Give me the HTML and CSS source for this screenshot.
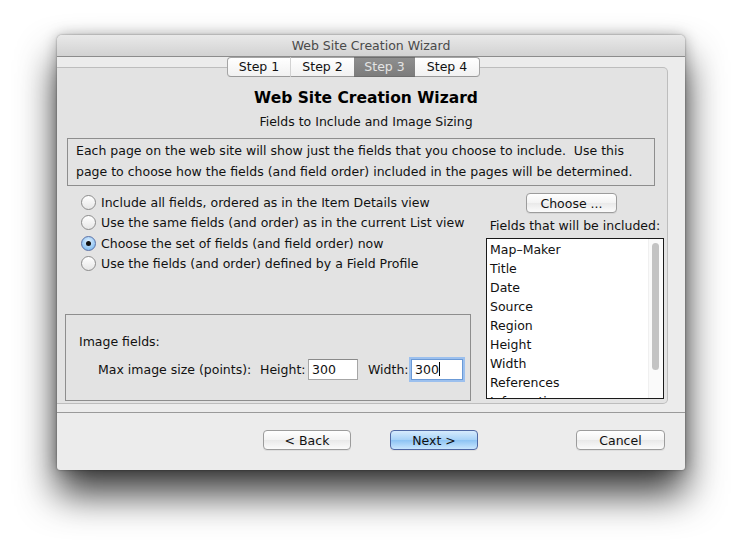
FILE: index.html
```html
<!DOCTYPE html>
<html lang="en">
<head>
  <meta charset="UTF-8" />
  <title>Web Site Creation Wizard</title>
  <link rel="stylesheet" href="styles.css">
</head>
<body>

<div class="window">
  <div class="titlebar">Web Site Creation Wizard</div>

  <div class="tabs">
    <span class="tab t1">Step 1</span>
    <span class="tab t2">Step 2</span>
    <span class="tab t3 active">Step 3</span>
    <span class="tab t4">Step 4</span>
  </div>

  <div class="panel">
    <h1>Web Site Creation Wizard</h1>
    <p class="subtitle">Fields to Include and Image Sizing</p>
    <div class="intro">
      Each page on the web site will show just the fields that you choose to include.&nbsp; Use this<br>
      page to choose how the fields (and field order) included in the pages will be determined.
    </div>

    <div class="columns">
      <div class="left">
        <div class="radios">
          <label class="radio"><span class="circle"></span>Include all fields, ordered as in the Item Details view</label>
          <label class="radio"><span class="circle"></span>Use the same fields (and order) as in the current List view</label>
          <label class="radio"><span class="circle checked"></span>Choose the set of fields (and field order) now</label>
          <label class="radio"><span class="circle"></span>Use the fields (and order) defined by a Field Profile</label>
        </div>

        <div class="image-box">
          <div class="image-title">Image fields:</div>
          <div class="size-row">
            <span class="lbl-max">Max image size (points):</span>
            <span class="lbl-h">Height:</span>
            <span class="field f-h">300</span>
            <span class="lbl-w">Width:</span>
            <span class="field f-w focus">300<span class="caret"></span></span>
          </div>
        </div>
      </div>

      <div class="right">
        <button class="btn choose">Choose ...</button>
        <div class="list-label">Fields that will be included:</div>
        <div class="list">
          <ul>
            <li>Map–Maker</li>
            <li>Title</li>
            <li>Date</li>
            <li>Source</li>
            <li>Region</li>
            <li>Height</li>
            <li>Width</li>
            <li>References</li>
            <li>Information</li>
          </ul>
          <div class="track"><div class="thumb"></div></div>
        </div>
      </div>
    </div>
  </div>

  <div class="footer">
    <button class="btn back">&lt; Back</button>
    <button class="btn next">Next &gt;</button>
    <button class="btn cancel">Cancel</button>
  </div>
</div>

</body>
</html>
```

FILE: styles.css
```css
html { background: #fff; }
body { margin: 0; min-height: 549px; background: #fff; font-family: "DejaVu Sans", "Liberation Sans", sans-serif; font-size: 12.5px; color: #111; }

.window { margin: 35px 0 0 57px; width: 628px; height: 435px; background: #ececec; border-radius: 5px 5px 3px 3px; box-shadow: 0 24px 38px rgba(0,0,0,0.78), 0 0 14px rgba(0,0,0,0.25), 0 0 2px rgba(0,0,0,0.45); overflow: hidden; display: flex; flex-direction: column; }

.titlebar { height: 21px; line-height: 22px; text-align: center; color: #4a4a4a; font-size: 12.5px; background: linear-gradient(#e9e9e9, #d2d2d2); border-bottom: 1px solid #8c8c8c; flex: none; }

.tabs { display: flex; margin-left: 170px; height: 20px; margin-bottom: -10px; position: relative; z-index: 2; flex: none; }
.tab { height: 18px; line-height: 18px; text-align: center; background: linear-gradient(#ffffff, #f1f1f1); border-top: 1px solid #a5a5a5; border-bottom: 1px solid #9a9a9a; color: #111; }
.t1 { width: 62px; border-left: 1px solid #a5a5a5; border-radius: 4px 0 0 4px; border-right: 1px solid #d2d2d2; }
.t2 { width: 63px; }
.t3 { width: 61px; }
.t4 { width: 64px; border-right: 1px solid #a5a5a5; border-radius: 0 4px 4px 0; }
.tab.active { background: linear-gradient(#8e8e8e, #7c7c7c); color: #e4e4e4; border-top-color: #6e6e6e; border-bottom-color: #6e6e6e; }

.panel { width: 598px; height: 315px; padding: 20px 2px 0 10px; background: #e3e3e3; border: 1px solid #bdbdbd; border-left: none; border-radius: 0 5px 5px 0; flex: none; }

h1 { margin: 0; font-size: 15.5px; line-height: 20px; text-align: center; font-weight: bold; color: #000; }
.subtitle { margin: 5px 0 0; line-height: 18px; text-align: center; color: #111; }

.intro { margin-top: 7px; width: 571px; height: 44px; padding: 1px 7px 1px 8px; border: 1px solid #8e8e8e; line-height: 21px; }

.columns { display: flex; gap: 15px; }
.left { width: 404px; }
.right { width: 178px; display: flex; flex-direction: column; align-items: center; }

.radios { margin: 6px 0 0 14px; }
.radio { display: flex; align-items: center; height: 20.5px; }
.circle { box-sizing: border-box; width: 15px; height: 15px; border-radius: 50%; border: 1px solid #8c8c8c; background: linear-gradient(#ffffff, #e6e6e6); margin-right: 5px; display: flex; align-items: center; justify-content: center; }
.circle.checked { border-color: #5a72a8; background: radial-gradient(circle at 50% 35%, #e2f1ff, #8ec3f2 70%, #6aa6e0); }
.circle.checked::after { content: ""; width: 5px; height: 5px; border-radius: 50%; background: #111; }

.image-box { margin: 40px 0 0 -2px; width: 404px; height: 85px; border: 1px solid #8e8e8e; }
.image-title { margin: 18px 0 0 13px; line-height: 18px; }
.size-row { display: flex; align-items: center; margin: 7px 0 0 32px; height: 22px; }
.lbl-max { width: 162px; }
.lbl-h { width: 48px; }
.lbl-w { width: 43px; margin-left: 10px; }
.field { box-sizing: border-box; height: 21px; line-height: 19px; padding-left: 3px; background: #fff; border: 1px solid #a6a6a6; border-top-color: #8a8a8a; }
.f-h { width: 50px; }
.f-w { width: 52px; }
.field.focus { border-color: #6b9ad6; box-shadow: 0 0 0 2px #9cc0ee; }
.caret { display: inline-block; width: 1px; height: 14px; background: #000; vertical-align: -2px; }

.btn { box-sizing: border-box; height: 20px; padding: 0; font-family: inherit; font-size: 12.5px; color: #111; background: linear-gradient(#ffffff, #f3f3f3 50%, #e9e9e9 51%, #fbfbfb); border: 1px solid #9c9c9c; border-radius: 4px; box-shadow: 0 1px 0 rgba(0,0,0,0.06); }
.choose { width: 91px; margin: 7px 0 0 -7px; }
.list-label { margin-top: 5px; line-height: 16px; }
.list { margin-top: 4px; width: 178px; height: 161px; box-sizing: border-box; border: 1px solid #1a1a1a; background: #fff; display: flex; overflow: hidden; }
.list ul { list-style: none; margin: 0; padding: 1px 0 0 3px; flex: 1; }
.list li { line-height: 19px; }
.track { width: 14px; border-left: 1px solid #f0f0f0; background: #fafafa; }
.thumb { margin: 4px 0 0 3px; width: 7px; height: 127px; border-radius: 4px; background: #c3c3c3; }

.footer { margin-top: 8px; border-top: 1px solid #9a9a9a; flex: 1; display: flex; padding: 17px 0 0 206px; }
.back { width: 88px; }
.next { width: 88px; margin-left: 39px; border-color: #4f68a3; background: linear-gradient(#d6ebfd, #a7d2f7 50%, #8cc3f3 51%, #c9e6fe); }
.cancel { width: 89px; margin-left: 98px; }
```
